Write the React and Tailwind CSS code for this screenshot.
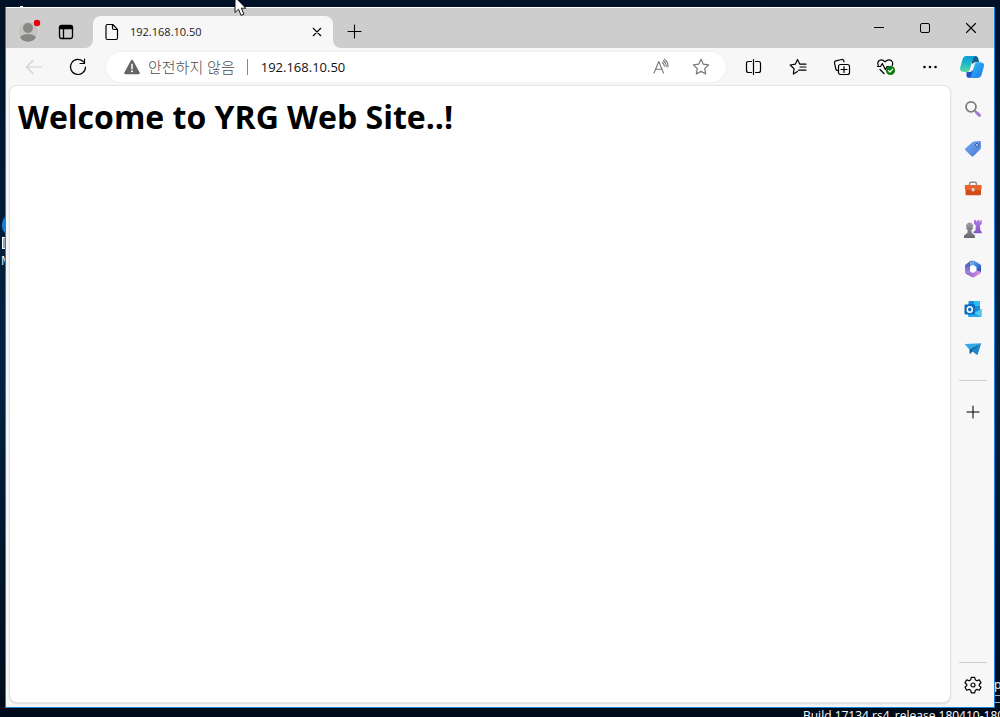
import React from "react";

const line = { fill: "none", stroke: "currentColor", strokeLinecap: "round", strokeLinejoin: "round" };

function IconButton({ label, className = "", children }) {
  return (
    <button type="button" aria-label={label} className={`flex shrink-0 items-center justify-center ${className}`}>
      {children}
    </button>
  );
}

function Avatar() {
  return (
    <svg width="26" height="26" viewBox="0 0 26 26">
      <circle cx="13" cy="14.5" r="10.5" fill="#c6c4c1" stroke="#dad8d4" />
      <circle cx="13" cy="11" r="5" fill="#8a8886" />
      <path d="M5 20.5c1.500-2.800 4.600-3.500 8-3.500s6.500.7 8 3.500c-2 2.900-4.800 4.300-8 4.300s-6-1.400-8-4.300z" fill="#8a8886" />
      <circle cx="22" cy="6" r="3.200" fill="#e60012" />
    </svg>
  );
}

function TabActions() {
  return (
    <svg width="16" height="16" viewBox="0 0 16 16" {...line} strokeWidth="1.300">
      <rect x="1.500" y="1.700" width="13" height="12.800" rx="2.200" />
      <path d="M1.500 4V3.500Q1.500 1.500 3.500 1.500h9q2 0 2 2V4.500h-13z" fill="currentColor" />
      <path d="M5.500 5v9.500" />
    </svg>
  );
}

function PageIcon() {
  return (
    <svg width="14" height="18" viewBox="0 0 14 18" {...line} strokeWidth="1.200">
      <path d="M2.500 1.500h5.200l4.800 4.800v8.700q0 1.500-1.500 1.500H2.500q-1.500 0-1.500-1.500V3q0-1.500 1.500-1.500z" />
      <path d="M7.500 1.700v3.300q0 1.500 1.500 1.500h3.300" />
    </svg>
  );
}

function Cross({ size, width }) {
  return (
    <svg width={size} height={size} viewBox="0 0 12 12" {...line} strokeWidth={width}>
      <path d="M1.500 1.500l9 9M10.500 1.500l-9 9" />
    </svg>
  );
}

function Plus({ size }) {
  return (
    <svg width={size} height={size} viewBox="0 0 15 15" {...line} strokeWidth="1.100">
      <path d="M7.500 1v13M1 7.500h13" />
    </svg>
  );
}

function Back() {
  return (
    <svg width="18" height="16" viewBox="0 0 18 16" {...line} strokeWidth="1.100">
      <path d="M16.500 8h-15M8 1.500L1.500 8 8 14.500" />
    </svg>
  );
}

function Reload() {
  return (
    <svg width="18" height="18" viewBox="0 0 18 18" {...line} strokeWidth="1.200">
      <path d="M16.500 9a7.500 7.500 0 1 1-1.700-4.800" />
      <path d="M15.500 1v4.500H11" />
    </svg>
  );
}

function Warning() {
  return (
    <svg width="16" height="16" viewBox="0 0 16 16">
      <path d="M8 .8Q8.700.8 9.100 1.500l6.500 12q.7 1.600-1 1.700H1.400q-1.700-.1-1-1.700l6.500-12Q7.300.8 8 .8z" fill="#666" />
      <path d="M8 5.500v4.300" stroke="#fff" strokeWidth="1.500" strokeLinecap="round" />
      <circle cx="8" cy="12.300" r="1" fill="#fff" />
    </svg>
  );
}

function ReadAloud() {
  return (
    <svg width="18" height="18" viewBox="0 0 18 18" {...line} strokeWidth="1.100">
      <path d="M2 15L6.800 3.500 11.500 15M3.500 11.300H10" />
      <path d="M10.500 4.500q1.800 1.500 1.800 3.800M11.300 2.800q3 2 3 6M12.300 1.200q4 2.500 3.700 7.500" />
    </svg>
  );
}

function Star() {
  return (
    <svg width="18" height="18" viewBox="0 0 18 18" {...line} strokeWidth="1.200">
      <path d="M9 1.300l2.300 4.900 5.300.7-3.900 3.700 1 5.400L9 13.400 4.300 16l1-5.400L1.400 6.900l5.300-.7z" />
    </svg>
  );
}

function SplitView() {
  return (
    <svg width="18" height="18" viewBox="0 0 18 18" {...line} strokeWidth="1.200">
      <path d="M6.500 3.500H3.500q-2 0-2 2v7q0 2 2 2h3M10.500 3.500h3q2 0 2 2v7q0 2-2 2h-3M8.500 1.500v15" />
    </svg>
  );
}

function Favorites() {
  return (
    <svg width="18" height="18" viewBox="0 0 18 18" {...line} strokeWidth="1.200">
      <path d="M8.500 13.500L4.300 16l.8-5.300L1.200 7l5.100-.8L8.500 1.500l2.300 4.700H17" />
      <path d="M11 9h6M9.500 12.200H17" />
    </svg>
  );
}

function Collections() {
  return (
    <svg width="18" height="18" viewBox="0 0 18 18" {...line} strokeWidth="1.200">
      <path d="M5 12.500q-1.800.2-2.200-1.500L1.500 4.800Q1.200 3.200 2.800 2.800L8.700 1.500q1.500-.3 2 1.200l.3 1.200" />
      <rect x="5.500" y="6.500" width="11" height="10" rx="2" />
      <path d="M11 8.500v6M8 11.500h6" />
    </svg>
  );
}

function Essentials() {
  return (
    <svg width="20" height="18" viewBox="0 0 20 18" {...line} strokeWidth="1.200">
      <path d="M2.300 7.500Q1 4.500 3 2.800 6 .5 9 3.800 12.500.5 15.500 2.800q2 2 .7 5M1.500 8.500h3l1.800-3 3 6 1.700-3h3.500M4 11.500L8 15.500" />
      <circle cx="14.500" cy="12.500" r="4.600" fill="#107c10" stroke="none" />
      <path d="M12.500 12.600l1.500 1.400 2.700-2.800" stroke="#fff" />
    </svg>
  );
}

function More() {
  return (
    <svg width="16" height="6" viewBox="0 0 16 6" fill="currentColor">
      <circle cx="2.500" cy="3" r="1.300" /><circle cx="8" cy="3" r="1.300" /><circle cx="13.500" cy="3" r="1.300" />
    </svg>
  );
}

function Copilot() {
  return (
    <svg width="26" height="24" viewBox="0 0 26 24">
      <defs>
        <linearGradient id="copLeft" x1="0" y1="0" x2="0" y2="1">
          <stop stopColor="#0b9fdb" /><stop offset=".5" stopColor="#20b9c9" /><stop offset="1" stopColor="#62d7a0" />
        </linearGradient>
        <linearGradient id="copRight" x1="0" y1="0" x2="1" y2="1">
          <stop stopColor="#3cc8f4" /><stop offset=".5" stopColor="#279cf0" /><stop offset="1" stopColor="#2376e7" />
        </linearGradient>
      </defs>
      <path d="M13 1h3.500q2 0 2.600 2l1.200 4.300h-4q-2 0-2.600 2L12 6z" fill="#116592" />
      <path d="M7.500 17H11q1.600 0 2-1.800l1.500 1.300-1.500 4.700Q12.300 23 10.300 23q-2.300 0-2.900-2z" fill="#2052cb" />
      <path d="M7 1h9.500q-2 .5-2.500 2.500l-3.300 11.200Q10.100 17 8 17H4.500Q.3 16.500 1.200 12.500l2.500-8.700Q4.500 1 7 1z" fill="url(#copLeft)" />
      <path d="M19 23h-9.300q2-.5 2.600-2.500l3.300-11Q16.200 7.200 18.300 7.200h3.300q4.200.5 3.300 4.300l-2.500 8.700Q21.500 23 19 23z" fill="url(#copRight)" />
    </svg>
  );
}

function SearchIcon() {
  return (
    <svg width="18" height="18" viewBox="0 0 18 18" fill="none">
      <circle cx="7" cy="6.800" r="5" stroke="#7b7b7b" strokeWidth="1.700" />
      <path d="M10.800 10.700l1.800 1.800" stroke="#777" strokeWidth="1.600" />
      <path d="M12.500 12.500l3 2.800" stroke="#a174d8" strokeWidth="3" strokeLinecap="round" />
    </svg>
  );
}

function TagIcon() {
  return (
    <svg width="18" height="18" viewBox="0 0 18 18">
      <defs><linearGradient id="tag" x1="0" y1="0" x2="1" y2="1"><stop stopColor="#7aaaf3" /><stop offset="1" stopColor="#4379d5" /></linearGradient></defs>
      <path d="M10 1.600l5.500-.5q1.400 0 1.500 1.400L16.800 8q0 .8-.7 1.400l-6.500 6.500q-1.100 1.100-2.200 0L1.500 10.500q-1.100-1.200 0-2.300l6.800-6Q9 1.700 10 1.600z" fill="url(#tag)" />
      <circle cx="13" cy="5" r="1.500" fill="#dcebff" stroke="#2a51a4" />
    </svg>
  );
}

function ToolboxIcon() {
  return (
    <svg width="18" height="18" viewBox="0 0 18 18">
      <path d="M5.500 6V4q0-1.700 1.700-1.700h3.600q1.700 0 1.700 1.700v2" fill="none" stroke="#8b8b8b" strokeWidth="1.400" />
      <rect x=".8" y="5" width="16.800" height="5" rx="1" fill="#e9632f" />
      <path d="M1.500 10H17v4q0 1.300-1.300 1.300H2.800q-1.300 0-1.300-1.300z" fill="#d34b19" />
      <rect x="7.700" y="8" width="2.800" height="3.500" rx="1.200" fill="#d6d2cf" />
    </svg>
  );
}

function GamesIcon() {
  return (
    <svg width="20" height="20" viewBox="0 0 20 20">
      <defs>
        <linearGradient id="rook" x1="0" y1="0" x2="0" y2="1"><stop stopColor="#b27be4" /><stop offset="1" stopColor="#8155c2" /></linearGradient>
        <linearGradient id="pawn" x1="0" y1="0" x2="0" y2="1"><stop stopColor="#a1a1a1" /><stop offset="1" stopColor="#696969" /></linearGradient>
      </defs>
      <path d="M11 1h2v1.500h1.200V1h2v1.500h1.200V1h1.300v4l-1.700 1.200.4 5L18.800 13v1.300H10.500V13l2-1.800.3-5L11 5z" fill="url(#rook)" />
      <path d="M3.700 9a3.500 3.500 0 1 1 5.800 0v1.500H8.300l.6 3.500 3 2.500v2.500H1v-2.500L4.300 14l.5-3.500H3.700z" fill="url(#pawn)" />
      <path d="M3.300 9.700h6.500" stroke="#777" />
    </svg>
  );
}

function OfficeIcon() {
  return (
    <svg width="18" height="18" viewBox="0 0 18 18">
      <defs>
        <linearGradient id="officeTop" x1="0" y1="0" x2="1" y2="1"><stop stopColor="#7cc4f5" /><stop offset=".5" stopColor="#3c86dc" /><stop offset="1" stopColor="#2b3f9e" /></linearGradient>
        <linearGradient id="officeLeft" x1="0" y1="0" x2="0" y2="1"><stop stopColor="#3f4fb4" /><stop offset=".6" stopColor="#8a74d6" /><stop offset="1" stopColor="#a99be8" /></linearGradient>
        <linearGradient id="officeBase" x1="0" y1="0" x2="1" y2="0"><stop stopColor="#8b5fc7" /><stop offset="1" stopColor="#d495e4" /></linearGradient>
      </defs>
      <path d="M7 .8h3.500l5.500 3.400q1 .6 1 1.800v6.500l-4.500-2V7L9 4.800 5.500 6.500z" fill="url(#officeTop)" />
      <path d="M8.500.7L6 2.400v8.800l2.600 1.500-3.900 2.500L2 13.800Q1 13.200 1 12V6q0-1.200 1-1.800L6.500 1z" fill="url(#officeLeft)" />
      <path d="M1.500 13.200L9 13l3.500-2.400 4.500 1.200q-.1 1.500-1 2L10 17.200q-1 .6-2 0l-5.500-3.100z" fill="url(#officeBase)" />
      <path d="M9 5.500l3 1.700v3.700L9 12.600l-3-1.700V7.200z" fill="#fff" />
    </svg>
  );
}

function OutlookIcon() {
  return (
    <svg width="18" height="18" viewBox="0 0 18 18">
      <rect x="4.500" y="1" width="11.500" height="13" rx="1" fill="#1490df" />
      <path d="M10 1h6v5h-6z" fill="#35bdf0" /><path d="M4.500 4h5.500v5H4.500z" fill="#0364b8" />
      <path d="M4 10l6 3 7.500-4v7q0 1-1 1H5q-1 0-1-1z" fill="#28a8ea" />
      <path d="M10 13l7 3.800L17.500 9z" fill="#50c9f1" />
      <rect x=".5" y="4.500" width="10.500" height="10" rx="1" fill="#0f6cbd" />
      <ellipse cx="5.800" cy="9.500" rx="2.500" ry="2.800" fill="none" stroke="#fff" strokeWidth="1.500" />
    </svg>
  );
}

function PlaneIcon() {
  return (
    <svg width="18" height="18" viewBox="0 0 18 18">
      <path d="M.8 4L17 3.300 6 10.500z" fill="#35a8e7" />
      <path d="M17 3.300L5.800 9.500V14l3-2.700z" fill="#17649d" />
      <path d="M17.200 3.200L7.700 10.800l5 3.900q.7.300 1-.5z" fill="#1688ce" />
      <path d="M8 11l-2.200 3.300L5.800 9.500z" fill="#0a4f8d" />
    </svg>
  );
}

function Gear() {
  return (
    <svg width="18" height="18" viewBox="0 0 18 18" {...line} strokeWidth="1.200">
      <path d="M7.300 1.300h3.400l.6 2.500 1.500.9 2.500-.8L17 6.800l-1.800 1.700v1.100l1.800 1.700-1.700 2.900-2.500-.8-1.500.9-.6 2.500H7.300l-.6-2.500-1.500-.9-2.500.8L1 11.300l1.800-1.700V8.500L1 6.800l1.700-2.900 2.500.8 1.500-.9z" />
      <circle cx="9" cy="9" r="2" />
    </svg>
  );
}

function TitleBar() {
  return (
    <header className="flex h-[41px] shrink-0 items-end border-t border-white bg-[#cdcdcd]">
      <IconButton label="프로필" className="h-9 w-11"><Avatar /></IconButton>
      <IconButton label="탭 작업 메뉴" className="h-8 w-8"><TabActions /></IconButton>
      <div className="relative ml-[11px] flex h-8 w-60 items-center rounded-t-lg bg-[#f7f7f7] pl-3 pr-2">
        <span className="absolute bottom-0 -left-2 size-2 bg-[#f7f7f7]"><span className="block size-2 rounded-br-lg bg-[#cdcdcd]" /></span>
        <span className="absolute bottom-0 -right-2 size-2 bg-[#f7f7f7]"><span className="block size-2 rounded-bl-lg bg-[#cdcdcd]" /></span>
        <PageIcon />
        <span className="ml-[11px] flex-1 text-[11px] leading-4 text-[#202020]">192.168.10.50</span>
        <IconButton label="탭 닫기" className="size-4"><Cross size={10} width="1.3" /></IconButton>
      </div>
      <IconButton label="새 탭" className="ml-1 h-[34px] w-[35px]"><Plus size={15} /></IconButton>
      <div className="ml-auto flex h-10">
        <IconButton label="최소화" className="w-[46px]"><svg width="10" height="2" viewBox="0 0 10 2"><path d="M0 .5h10" stroke="currentColor" /></svg></IconButton>
        <IconButton label="최대화" className="w-[46px]"><svg width="11" height="11" viewBox="0 0 11 11" {...line}><rect x=".5" y=".5" width="9" height="9" rx="1.500" /></svg></IconButton>
        <IconButton label="닫기" className="w-[46px]"><Cross size={12} width="1.1" /></IconButton>
      </div>
    </header>
  );
}

const tools = [
  ["화면 분할", SplitView],
  ["즐겨찾기", Favorites],
  ["컬렉션", Collections],
  ["브라우저 에센셜", Essentials],
  ["설정 및 기타", More],
];

function Toolbar() {
  return (
    <nav className="flex h-[37px] shrink-0 items-center bg-[#f7f7f7] pl-[6px] pr-[2px]">
      <IconButton label="뒤로" className="h-8 w-11 text-[#cfcfcf]"><Back /></IconButton>
      <IconButton label="새로 고침" className="h-8 w-11"><Reload /></IconButton>
      <div className="mx-[6px] flex h-[30px] min-w-0 flex-1 items-center rounded-full bg-white pl-[18px] pr-[5px] shadow-[0_0_3px_rgba(0,0,0,0.06)]">
        <Warning />
        <span className="ml-2 shrink-0 text-[15px] leading-5 font-light text-[#4d4d4d]">안전하지 않음</span>
        <span className="mx-3 h-4 w-px bg-[#8b8b8b]" />
        <input aria-label="주소" defaultValue="192.168.10.50" className="min-w-0 flex-1 bg-transparent pl-px text-[13px] leading-5 text-[#111] outline-none" />
        <IconButton label="소리내어 읽기" className="h-7 w-10 text-[#767676]"><ReadAloud /></IconButton>
        <IconButton label="즐겨찾기에 추가" className="h-7 w-10 text-[#767676]"><Star /></IconButton>
      </div>
      {tools.map(([label, Icon]) => (
        <IconButton key={label} label={label} className="h-8 w-11"><Icon /></IconButton>
      ))}
      <IconButton label="Copilot" className="h-8 w-10"><Copilot /></IconButton>
    </nav>
  );
}

const apps = [
  ["검색", SearchIcon],
  ["쇼핑", TagIcon],
  ["도구", ToolboxIcon],
  ["게임", GamesIcon],
  ["Microsoft 365", OfficeIcon],
  ["Outlook", OutlookIcon],
  ["Drop", PlaneIcon],
];

function Sidebar() {
  return (
    <aside className="flex w-[43px] shrink-0 flex-col items-center pt-1">
      {apps.map(([label, Icon]) => (
        <IconButton key={label} label={label} className="h-10 w-10"><Icon /></IconButton>
      ))}
      <hr className="mt-[11px] w-7 border-[#cfcfcf]" />
      <IconButton label="사용자 지정" className="mt-[11px] h-10 w-10"><Plus size={14} /></IconButton>
      <hr className="mt-auto w-7 border-[#cfcfcf]" />
      <IconButton label="설정" className="h-11 w-10"><Gear /></IconButton>
    </aside>
  );
}

function Desktop() {
  return (
    <div aria-hidden="true" className="absolute inset-0 overflow-hidden text-white">
      <span className="absolute top-[214px] left-[2px] h-[22px] w-5 rounded-full bg-[#1681d8]" />
      <span className="absolute top-[237px] left-[2px] h-3 w-3 border border-white bg-[#9ca5b4]" />
      <span className="absolute top-[253px] left-px text-[12px] leading-4">M</span>
      <span className="absolute top-[677px] left-[994px] text-[12px] leading-4">p</span>
      <span className="absolute top-[695px] left-[994px] h-px w-2 bg-[#a9b0bd]" />
      <span className="absolute top-[702px] left-[994px] h-px w-2 bg-[#a9b0bd]" />
      <span className="absolute top-[708px] left-[803px] whitespace-nowrap text-[12px] leading-4">Build 17134.rs4_release.180410-1804</span>
      <span className="absolute top-[6px] left-[20px] h-px w-[3px] bg-white" />
    </div>
  );
}

function Pointer() {
  return (
    <svg aria-hidden="true" className="pointer-events-none absolute -top-1 left-[234px]" width="13" height="21" viewBox="0 0 13 21">
      <path d="M1 1v15.500l3.500-3.300 2.600 6.200 2.800-1.200-2.600-6h4.500z" fill="#fff" stroke="#111" />
    </svg>
  );
}

export default function App() {
  return (
    <div className="relative flex h-screen flex-col overflow-hidden bg-linear-to-b from-[#001127] via-[#002344] to-[#000b1b] pt-[7px] pr-[5px] pb-[9px] pl-[5px] font-['Open_Sans','Noto_Sans_CJK_KR',sans-serif] text-black">
      <Desktop />
      <div className="relative flex min-h-0 flex-1 flex-col border-x border-b border-[#1683d8] bg-[#f7f7f7]">
        <TitleBar />
        <Toolbar />
        <div className="flex min-h-0 flex-1">
          <main className="mb-1 ml-[3px] min-w-0 flex-1 rounded-lg border border-[#e5e5e5] bg-white px-2 pt-[9px] shadow-[0_1px_2px_rgba(0,0,0,0.12)]">
            <h1 className="text-[32px] leading-[44px] font-bold">Welcome to YRG Web Site..!</h1>
          </main>
          <Sidebar />
        </div>
      </div>
      <Pointer />
    </div>
  );
}
